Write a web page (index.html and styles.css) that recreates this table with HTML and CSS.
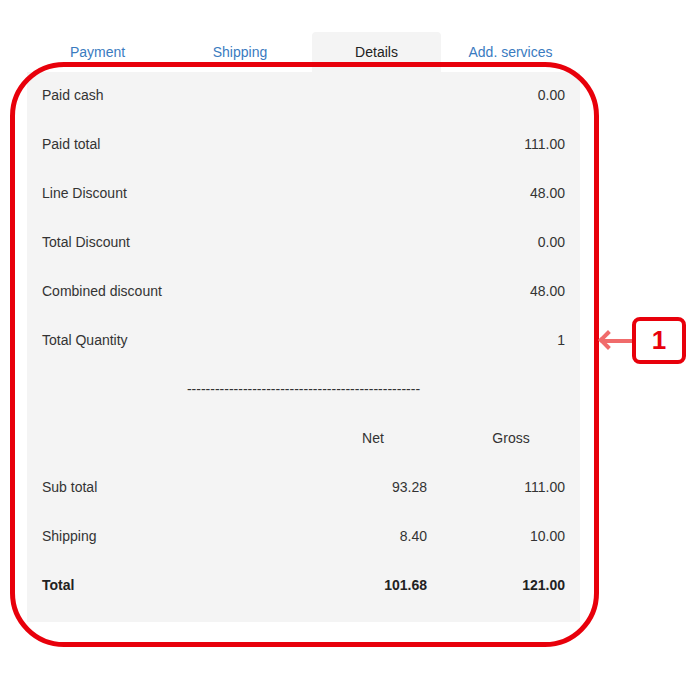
FILE: index.html
```html
<!DOCTYPE html>
<html lang="en">
  <head>
    <meta charset="UTF-8" />
    <meta name="viewport" content="width=device-width, initial-scale=1.0" />
    <title>Details</title>
    <link rel="stylesheet" href="styles.css">
  </head>
  <body>
    <div class="wrap">
      <ul class="tabs">
        <li>Payment</li>
        <li>Shipping</li>
        <li class="current">Details</li>
        <li>Add. services</li>
      </ul>
      <div class="panel">
        <div class="row"><span>Paid cash</span><span class="num">0.00</span></div>
        <div class="row"><span>Paid total</span><span class="num">111.00</span></div>
        <div class="row"><span>Line Discount</span><span class="num">48.00</span></div>
        <div class="row"><span>Total Discount</span><span class="num">0.00</span></div>
        <div class="row"><span>Combined discount</span><span class="num">48.00</span></div>
        <div class="row"><span>Total Quantity</span><span class="num">1</span></div>
        <div class="row sep">--------------------------------------------------</div>
        <div class="row three"><span></span><span class="head">Net</span><span class="head">Gross</span></div>
        <div class="row three"><span>Sub total</span><span class="num">93.28</span><span class="num">111.00</span></div>
        <div class="row three"><span>Shipping</span><span class="num">8.40</span><span class="num">10.00</span></div>
        <div class="row three total"><span>Total</span><span class="num">101.68</span><span class="num">121.00</span></div>
      </div>

      <!-- annotation -->
      <div class="mark"></div>
      <div class="arrow"></div>
      <div class="badge">1</div>
    </div>
  </body>
</html>
```

FILE: styles.css
```css
* {
  margin: 0;
  padding: 0;
  box-sizing: border-box;
}
body {
  background: #fff;
  font-family: "Liberation Sans", Arial, sans-serif;
  font-size: 14px;
  color: #333;
}
.wrap {
  position: relative;
  width: 687px;
  height: 684px;
  padding: 32px 0 0 27px;
}
.tabs {
  display: grid;
  grid-template-columns: 141px 144px 129px 139px;
  width: 553px;
}
.tabs > li {
  list-style: none;
  height: 40px;
  line-height: 40px;
  text-align: center;
  color: #3a7bbf;
  border-radius: 4px 4px 0 0;
}
.tabs > li.current {
  background-color: #f4f4f4;
  color: #222;
}
.panel {
  width: 553px;
  background-color: #f4f4f4;
  padding: 0 15px 11px;
}
.row {
  display: flex;
  justify-content: space-between;
  height: 49px;
  padding-top: 15px;
  line-height: 17px;
}
.row.sep {
  justify-content: center;
  color: #333;
}
.row.three {
  display: grid;
  grid-template-columns: 1fr 108px 108px;
  column-gap: 30px;
}
.num {
  text-align: right;
}
.head {
  text-align: center;
}
.total {
  font-weight: bold;
  color: #222;
}
.mark {
  position: absolute;
  left: 10px;
  top: 62px;
  width: 589px;
  height: 585px;
  border: 5px solid #e8000b;
  border-radius: 54px;
}
.arrow {
  position: absolute;
  left: 603px;
  top: 339px;
  width: 30px;
  height: 4px;
  background: #f06b6b;
}
.arrow::before {
  content: "";
  position: absolute;
  left: -2px;
  top: -6px;
  width: 10px;
  height: 10px;
  border-left: 4px solid #f06b6b;
  border-bottom: 4px solid #f06b6b;
  transform: rotate(45deg);
}
.badge {
  position: absolute;
  left: 632px;
  top: 317px;
  width: 54px;
  height: 47px;
  border: 4px solid #e8000b;
  border-radius: 8px;
  background: #fff;
  color: #e8000b;
  font-weight: bold;
  font-size: 26px;
  line-height: 39px;
  text-align: center;
}
```
